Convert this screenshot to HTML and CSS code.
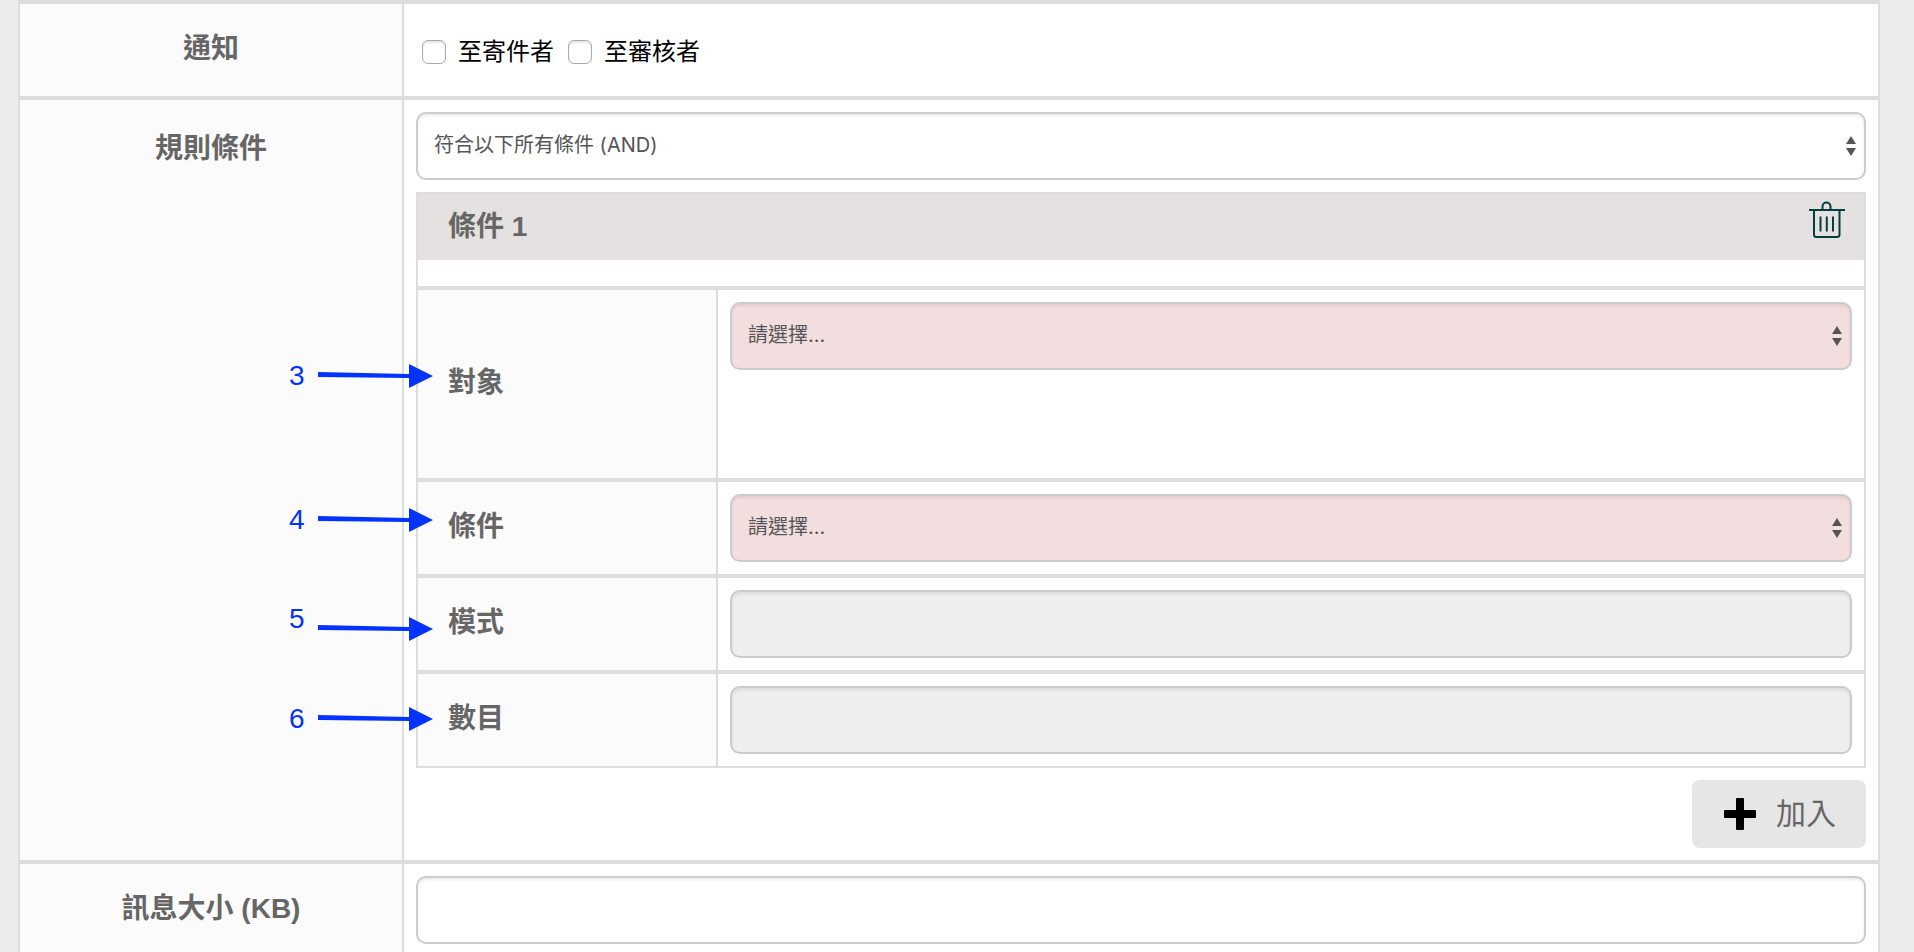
FILE: index.html
```html
<!DOCTYPE html>
<html lang="zh-Hant">
<head>
    <meta charset="UTF-8">
    <meta name="viewport" content="width=device-width, initial-scale=1.0">
    <title>規則條件</title>
    <link rel="stylesheet" href="styles.css">
</head>
<body>
    <form class="rule-form">
        <div class="form-row">
            <div class="row-label">通知</div>
            <div class="row-field checks">
                <label class="check"><input type="checkbox" name="notify_sender">至寄件者</label>
                <label class="check"><input type="checkbox" name="notify_reviewer">至審核者</label>
            </div>
        </div>

        <div class="form-row rules">
            <label class="row-label" for="match">規則條件</label>
            <div class="row-field">
                <select class="control" id="match" name="match">
                    <option>符合以下所有條件 (AND)</option>
                </select>

                <div class="condition">
                    <div class="condition-header">
                        <h2>條件 1</h2>
                        <button type="button" class="delete" aria-label="刪除">
                            <svg width="36" height="38" viewBox="0 0 36 38" fill="none" stroke="#00403f" stroke-width="2">
                                <path d="M0 9H36"/>
                                <path d="M13.500 9V5.500a4 4 0 0 1 8 0V9"/>
                                <path d="M5 9V33.500a2.500 2.500 0 0 0 2.500 2.500H28a2.500 2.500 0 0 0 2.500-2.500V9"/>
                                <path d="M11.500 15.500V30.500M17.800 15.500V30.500M24 15.500V30.500"/>
                            </svg>
                        </button>
                    </div>
                    <div class="condition-row tall">
                        <label class="condition-label" for="target">對象</label>
                        <div class="condition-field">
                            <select class="control required" id="target" name="target">
                                <option>請選擇...</option>
                            </select>
                        </div>
                    </div>
                    <div class="condition-row">
                        <label class="condition-label" for="cond">條件</label>
                        <div class="condition-field">
                            <select class="control required" id="cond" name="cond">
                                <option>請選擇...</option>
                            </select>
                        </div>
                    </div>
                    <div class="condition-row">
                        <label class="condition-label" for="mode">模式</label>
                        <div class="condition-field">
                            <input type="text" class="control" id="mode" name="mode" disabled>
                        </div>
                    </div>
                    <div class="condition-row">
                        <label class="condition-label" for="amount">數目</label>
                        <div class="condition-field">
                            <input type="text" class="control" id="amount" name="amount" disabled>
                        </div>
                    </div>
                </div>

                <button type="button" class="add">
                    <svg width="32" height="32" viewBox="0 0 32 32">
                        <path d="M13 0h6a1 1 0 0 1 1 1v11h11a1 1 0 0 1 1 1v6a1 1 0 0 1-1 1H20v11a1 1 0 0 1-1 1h-6a1 1 0 0 1-1-1V20H1a1 1 0 0 1-1-1v-6a1 1 0 0 1 1-1h11V1a1 1 0 0 1 1-1z"/>
                    </svg>
                    <span>加入</span>
                </button>
            </div>
        </div>

        <div class="form-row">
            <label class="row-label" for="size">訊息大小 (KB)</label>
            <div class="row-field">
                <input type="text" class="control" id="size" name="size">
            </div>
        </div>
    </form>

    <!-- Numbered callouts -->
    <div class="callout step-3">
        <span>3</span>
        <svg width="115" height="24" viewBox="0 0 115 24"><path d="M0 8L91 10V0L115 12L91 24V14L0 13z"/></svg>
    </div>
    <div class="callout step-4">
        <span>4</span>
        <svg width="115" height="24" viewBox="0 0 115 24"><path d="M0 8L91 10V0L115 12L91 24V14L0 13z"/></svg>
    </div>
    <div class="callout step-5">
        <span>5</span>
        <svg width="115" height="24" viewBox="0 0 115 24"><path d="M0 8L91 10V0L115 12L91 24V14L0 13z"/></svg>
    </div>
    <div class="callout step-6">
        <span>6</span>
        <svg width="115" height="24" viewBox="0 0 115 24"><path d="M0 8L91 10V0L115 12L91 24V14L0 13z"/></svg>
    </div>
</body>
</html>
```
FILE: styles.css
```css
/* Basic Reset */
* {
    margin: 0;
    padding: 0;
    box-sizing: border-box;
    font-family: "Liberation Sans", "Noto Sans CJK TC", sans-serif;
}

body {
    background-color: #ececec;
    overflow: hidden;
}

/* Form Table */
.rule-form {
    margin: 0 34px 0 18px;
    background-color: #fff;
    border: 2px solid #ddd;
    border-width: 0 2px;
}

.form-row {
    display: grid;
    grid-template-columns: 384px 1fr;
    border-top: 4px solid #ddd;
}

.row-label {
    padding-top: 25px;
    background-color: #fbfbfb;
    border-right: 2px solid #ddd;
    text-align: center;
    font-size: 28px;
    font-weight: bold;
    line-height: 40px;
    color: #666;
}

.rules .row-label {
    padding-top: 29px;
}

.row-field {
    padding: 12px;
}

/* Checkboxes */
.checks {
    display: flex;
    align-items: center;
    gap: 14px;
    min-height: 92px;
    padding: 16px 12px 12px 18px;
}

.check {
    display: flex;
    align-items: center;
    gap: 12px;
    font-size: 24px;
    line-height: 32px;
    color: #000;
}

.check input {
    appearance: none;
    width: 24px;
    height: 24px;
    border: 1px solid #aaa;
    border-radius: 6px;
    background-color: #fff;
    box-shadow: inset 0 2px 2px rgba(0, 0, 0, 0.1);
}

/* Inputs And Selects */
.control {
    display: block;
    width: 100%;
    height: 68px;
    padding: 0 16px 2px;
    border: 2px solid #ccc;
    border-radius: 10px;
    background-color: #fff;
    box-shadow: inset 0 2px 3px rgba(0, 0, 0, 0.08);
    font-family: Inter, "Noto Sans CJK TC", sans-serif;
    font-size: 20px;
    color: #555;
}

select.control {
    appearance: none;
    background-image: url("data:image/svg+xml,%3Csvg xmlns='http://www.w3.org/2000/svg' width='10' height='20'%3E%3Cpath fill='%23555' d='M5 0L10 8H0zM0 12H10L5 20z'/%3E%3C/svg%3E");
    background-repeat: no-repeat;
    background-position: right 8px center;
}

.control.required {
    background-color: #f2dede;
}

.control:disabled {
    background-color: #eee;
}

/* Condition Box */
.condition {
    margin: 12px 0;
    border: 2px solid #ddd;
}

.condition-header {
    display: flex;
    justify-content: space-between;
    align-items: flex-start;
    height: 66px;
    margin-bottom: 26px;
    padding: 7px 19px 0 30px;
    background-color: #e5e1e1;
}

.condition-header h2 {
    font-size: 28px;
    line-height: 52px;
    color: #666;
}

.delete {
    display: flex;
    border: none;
    background: none;
    cursor: pointer;
}

.condition-row {
    display: grid;
    grid-template-columns: 300px 1fr;
    min-height: 96px;
    border-top: 4px solid #ddd;
}

.condition-row.tall {
    min-height: 192px;
}

.condition-label {
    display: flex;
    align-items: center;
    padding: 0 30px 8px;
    background-color: #fbfbfb;
    border-right: 2px solid #ddd;
    font-size: 28px;
    font-weight: bold;
    color: #666;
}

.condition-field {
    padding: 12px;
}

/* Add Button */
.add {
    display: flex;
    align-items: center;
    gap: 20px;
    height: 68px;
    margin-left: auto;
    padding: 0 30px 0 32px;
    border: none;
    border-radius: 8px;
    background-color: #e6e6e6;
    font-size: 30px;
    color: #666;
    cursor: pointer;
}

.add span {
    padding-bottom: 6px;
}

/* Callouts */
.callout {
    position: absolute;
    left: 289px;
    display: flex;
    align-items: center;
    gap: 13px;
    font-size: 28px;
    line-height: 26px;
    color: #0433ff;
    fill: #0433ff;
}

.step-3 {
    top: 363px;
}

.step-4 {
    top: 507px;
}

.step-5 {
    top: 606px;
    align-items: flex-start;
}

.step-5 svg {
    margin-top: 11px;
}

.step-6 {
    top: 706px;
}
```
